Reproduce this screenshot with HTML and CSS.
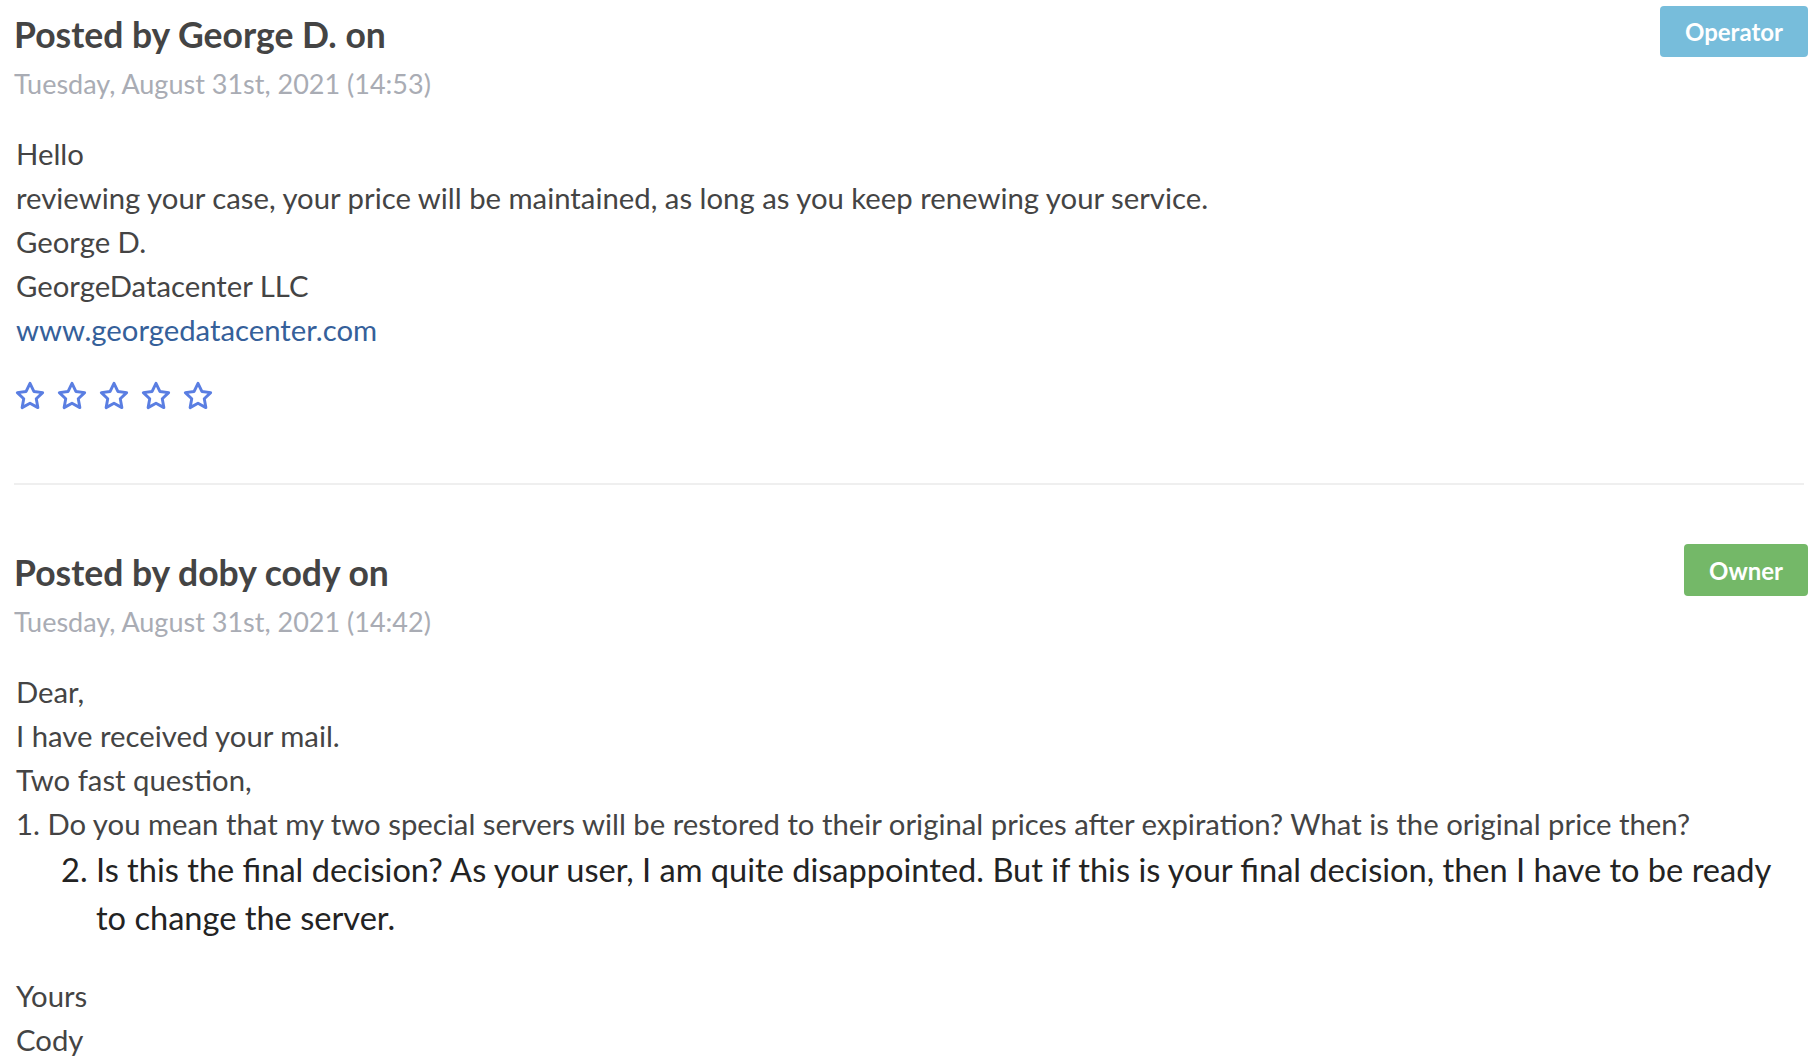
FILE: index.html
```html
<!DOCTYPE html>
<html lang="en">
<head>
<meta charset="utf-8">
<title>Ticket replies</title>
<link rel="stylesheet" href="styles.css">
</head>
<body>
<div class="thread">
  <article class="post">
    <header class="post-head">
      <div class="post-meta">
        <h3 class="post-title">Posted by George D. on</h3>
        <div class="post-date">Tuesday, August 31st, 2021 (14:53)</div>
      </div>
      <span class="badge badge-operator">Operator</span>
    </header>
    <div class="post-body">
      <p class="line">Hello</p>
      <p class="line">reviewing your case, your price will be maintained, as long as you keep renewing your service.</p>
      <p class="line">George D.</p>
      <p class="line">GeorgeDatacenter LLC</p>
      <p class="line"><a class="link" href="#">www.georgedatacenter.com</a></p>
    </div>
    <div class="rating">
      <svg class="star" viewBox="0 0 24 24"><polygon points="12 2.5 14.9 8.6 21.5 9.5 16.7 14.1 17.9 20.7 12 17.5 6.1 20.7 7.3 14.1 2.5 9.5 9.1 8.6"/></svg>
      <svg class="star" viewBox="0 0 24 24"><polygon points="12 2.5 14.9 8.6 21.5 9.5 16.7 14.1 17.9 20.7 12 17.5 6.1 20.7 7.3 14.1 2.5 9.5 9.1 8.6"/></svg>
      <svg class="star" viewBox="0 0 24 24"><polygon points="12 2.5 14.9 8.6 21.5 9.5 16.7 14.1 17.9 20.7 12 17.5 6.1 20.7 7.3 14.1 2.5 9.5 9.1 8.6"/></svg>
      <svg class="star" viewBox="0 0 24 24"><polygon points="12 2.5 14.9 8.6 21.5 9.5 16.7 14.1 17.9 20.7 12 17.5 6.1 20.7 7.3 14.1 2.5 9.5 9.1 8.6"/></svg>
      <svg class="star" viewBox="0 0 24 24"><polygon points="12 2.5 14.9 8.6 21.5 9.5 16.7 14.1 17.9 20.7 12 17.5 6.1 20.7 7.3 14.1 2.5 9.5 9.1 8.6"/></svg>
    </div>
  </article>

  <hr class="divider">

  <article class="post">
    <header class="post-head">
      <div class="post-meta">
        <h3 class="post-title">Posted by doby cody on</h3>
        <div class="post-date">Tuesday, August 31st, 2021 (14:42)</div>
      </div>
      <span class="badge badge-owner">Owner</span>
    </header>
    <div class="post-body">
      <p class="line">Dear,</p>
      <p class="line">I have received your mail.</p>
      <p class="line">Two fast question,</p>
      <p class="line">1. Do you mean that my two special servers will be restored to their original prices after expiration? What is the original price then?</p>
      <ol class="qlist" start="2">
        <li>Is this the final decision? As your user, I am quite disappointed. But if this is your final decision, then I have to be ready to change the server.</li>
      </ol>
      <p class="line">Yours</p>
      <p class="line">Cody</p>
    </div>
  </article>
</div>
</body>
</html>
```

FILE: styles.css
```css
html, body {
  margin: 0;
  padding: 0;
  background: #ffffff;
}

body {
  font-family: Lato, "Noto Sans", "Liberation Sans", sans-serif;
  color: #444444;
}

.thread {
  padding: 6px 8px 0 14px;
}

.post-head {
  display: flex;
  justify-content: space-between;
  align-items: flex-start;
}

.post-meta {
  padding-top: 7px;
}

.post-title {
  margin: 0;
  font-size: 35.5px;
  line-height: 44px;
  font-weight: 700;
  color: #444444;
}

.post-date {
  margin-top: 9px;
  font-size: 27px;
  line-height: 36px;
  color: #a9acb4;
}

.badge {
  display: inline-flex;
  align-items: center;
  justify-content: center;
  height: 51px;
  padding: 0 25px;
  border-radius: 4px;
  color: #ffffff;
  font-size: 24px;
  font-weight: 700;
}

.badge-operator {
  background: #77bddb;
}

.badge-owner {
  background: #74b868;
  height: 52px;
}

.post-body {
  margin-top: 30px;
  padding-left: 2px;
  font-size: 29.3px;
  line-height: 44px;
}

.line {
  margin: 0;
}

.link {
  color: #35609a;
  text-decoration: none;
}

.qlist {
  margin: 0 18px 32px 0;
  padding-left: 80px;
  font-size: 32.6px;
  line-height: 48px;
  color: #232323;
}

.rating {
  display: flex;
  gap: 10px;
  margin-top: 28px;
  padding-left: 0;
}

.star {
  width: 32px;
  height: 32px;
  fill: none;
  stroke: #5a7ee2;
  stroke-width: 2.2;
  stroke-linejoin: round;
}

.divider {
  margin: 71px 4px 59px 0;
  border: 0;
  height: 2px;
  background: #efefef;
}
```
